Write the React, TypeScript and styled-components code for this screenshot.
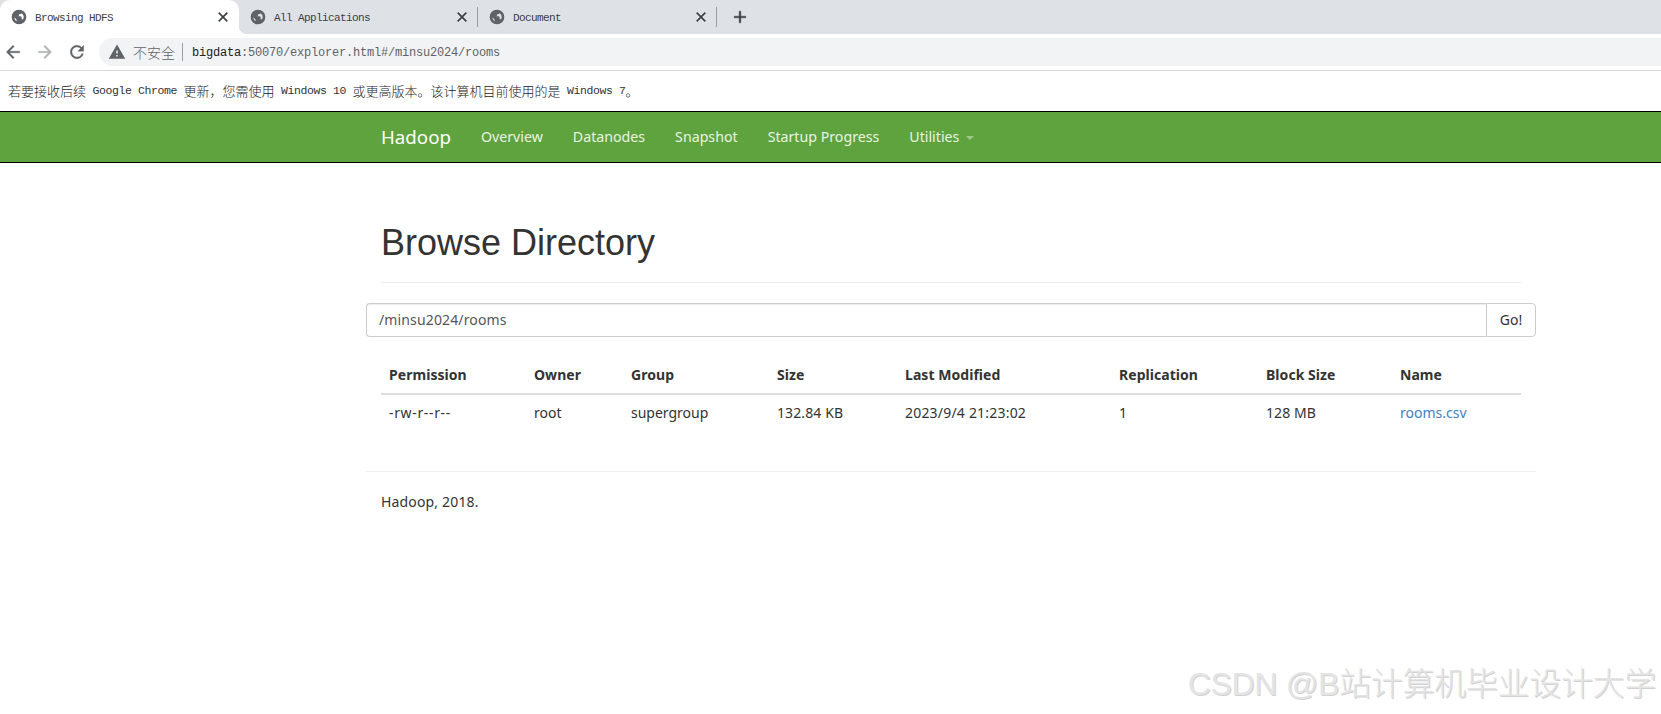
import React from "react";
import styled, { createGlobalStyle } from "styled-components";

const GlobalStyle = createGlobalStyle`
  html, body { margin: 0; padding: 0; background: #fff; }
  body { font-family: "Noto Sans", "Liberation Sans", sans-serif; font-size: 14px; color: #333; overflow: hidden; }
`;

const mono = `"Liberation Mono", "Noto Sans CJK SC", monospace`;
const cjk = `"Noto Sans CJK SC", "Liberation Mono", sans-serif`;

const Page = styled.div`position: relative; width: 1661px; height: 714px; overflow: hidden;`;

const TabStrip = styled.div`display: flex; height: 34px; background: #dee1e6;`;
const Tab = styled.div<{ $active?: boolean; $sep?: boolean }>`
  position: relative;
  width: 239px;
  box-sizing: border-box;
  display: flex;
  align-items: center;
  padding-left: 11px;
  background: ${p => (p.$active ? "#fff" : "transparent")};
  border-radius: ${p => (p.$active ? "10px 10px 0 0" : "0")};
  ${p => p.$active && `
    &::after {
      content: "";
      position: absolute;
      right: -8px;
      bottom: 0;
      width: 8px;
      height: 8px;
      background: radial-gradient(circle at 100% 0, transparent 8px, #fff 8.5px);
    }
  `}
  ${p => p.$sep && `
    &::before {
      content: "";
      position: absolute;
      right: 0;
      top: 7px;
      height: 20px;
      width: 1px;
      background: #9a9da1;
    }
  `}
`;
const TabTitle = styled.span`
  flex: 1;
  margin-left: 8px;
  font: 11px ${mono};
  letter-spacing: -0.6px;
  color: #3c4043;
  white-space: pre;
  position: relative;
  top: 0.5px;
`;
const Favicon = styled.svg`
  width: 16px; height: 16px; flex: none;
  fill: #5f6368; stroke: #5f6368; stroke-width: 2;
`;
const CloseIcon = styled.svg`width: 16px; height: 16px; flex: none; margin-right: 8px; fill: #3c4043; stroke: #3c4043; stroke-width: 0.7;`;
const NewTab = styled.svg`width: 20px; height: 20px; fill: #3c4043; stroke: #3c4043; stroke-width: 0.5; align-self: center; margin-left: 13px;`;

const Toolbar = styled.div`
  display: flex;
  align-items: center;
  height: 36px;
  background: #fff;
  border-bottom: 1px solid #d9d9d9;
`;
const NavIcon = styled.svg<{ $gap: number; $dim?: boolean }>`
  width: 20px; height: 20px; flex: none; margin-left: ${p => p.$gap}px;
  fill: ${p => (p.$dim ? "#b1b3b6" : "#5f6368")};
  stroke: ${p => (p.$dim ? "#b1b3b6" : "#5f6368")};
  stroke-width: 0.4;
`;
const Omnibox = styled.div`
  flex: 1;
  height: 28px;
  margin-left: 12px;
  border-radius: 14px 0 0 14px;
  background: #f1f3f4;
  display: flex;
  align-items: center;
  padding-left: 10px;
`;
const WarnIcon = styled.svg`width: 18px; height: 18px; fill: #5f6368; flex: none; margin-left: -1px;`;
const Insecure = styled.span`margin-left: 7px; font: 300 14px ${cjk}; color: #5f6368;`;
const OmniSep = styled.span`width: 1px; height: 18px; background: #9a9da1; margin: 0 9px 0 7px;`;
const Url = styled.span`font: 12px ${mono}; letter-spacing: -0.2px; color: #5f6368; white-space: pre; position: relative; top: 1px;`;
const Host = styled.span`color: #202124;`;

const InfoBar = styled.div`
  height: 40px;
  box-sizing: border-box;
  padding: 0 0 2px 8px;
  display: flex;
  align-items: center;
  font: 300 13px ${cjk};
  color: #222;
  white-space: pre;
`;
const Latin = styled.span`font: 11.5px ${mono}; letter-spacing: -0.4px; color: #333;`;

const Navbar = styled.nav`
  height: 50px;
  background: #5fa33e;
  border-top: 1px solid #000;
  border-bottom: 1px solid #000;
`;
const Container = styled.div`width: 1170px; margin-left: 366px;`;
const NavInner = styled(Container)`display: flex; align-items: center; height: 50px;`;
const Brand = styled.a`padding: 0 15px; font-size: 18.7px; color: #fff; line-height: 20px;`;
const NavLink = styled.a`
  display: flex;
  align-items: center;
  padding: 0 15px;
  font-size: 14.2px;
  line-height: 20px;
  color: #e9f3e2;
`;
const Caret = styled.span`
  display: inline-block;
  width: 0; height: 0;
  margin-left: 7px;
  margin-top: 2px;
  border-top: 4px solid #9ec98a;
  border-left: 4px solid transparent;
  border-right: 4px solid transparent;
`;

const Inner = styled.div`padding: 0 15px;`;
const PageHeader = styled.div`
  margin-top: 60px;
  padding-bottom: 19px;
  margin-bottom: 20px;
  border-bottom: 1px solid #eee;
`;
const Title = styled.h1`
  margin: 0;
  font: 400 36px/39.6px "Liberation Sans", Arial, sans-serif;
  color: #333;
`;
const InputGroup = styled.div`display: flex; height: 34px;`;
const PathInput = styled.div`
  flex: 1;
  box-sizing: border-box;
  border: 1px solid #ccc;
  border-right: 0;
  border-radius: 4px 0 0 4px;
  box-shadow: inset 0 1px 1px rgba(0,0,0,.075);
  padding: 6px 12px;
  line-height: 20px;
  letter-spacing: .14px;
  color: #555;
`;
const GoButton = styled.button`
  width: 50px;
  box-sizing: border-box;
  border: 1px solid #ccc;
  border-radius: 0 4px 4px 0;
  background: #fff;
  font: inherit;
  color: #333;
  padding: 0;
`;
const Table = styled.table`
  width: 1140px;
  table-layout: fixed;
  border-collapse: collapse;
  margin-top: 20px;
`;
const Col = styled.col<{ $w: number }>`width: ${p => p.$w}px;`;
const Th = styled.th`
  padding: 8px;
  text-align: left;
  font-weight: 700;
  line-height: 20px;
  letter-spacing: .05px;
  color: #333;
  border-bottom: 2px solid #ddd;
`;
const Td = styled.td<{ $track?: number }>`
  padding: 8px;
  line-height: 20px;
  color: #333;
  letter-spacing: ${p => p.$track ?? 0}px;
`;
const FileLink = styled.a`color: #3d83c0;`;
const Footer = styled.div`
  margin-top: 40px;
  border-top: 1px solid #eee;
  padding: 20px 15px 0;
  line-height: 20px;
  letter-spacing: .16px;
`;
const Watermark = styled.div`
  position: absolute;
  right: 5px;
  top: 664px;
  font: 300 32px/40px "Liberation Sans", "Noto Sans CJK SC", sans-serif;
  letter-spacing: -0.3px;
  color: #e4e4e4;
  text-shadow: 1px 1px 0 #d2d2d2;
  white-space: nowrap;
`;

const GLOBE = "M12 2C6.48 2 2 6.48 2 12s4.48 10 10 10 10-4.48 10-10S17.52 2 12 2zm-1 17.93c-3.95-.49-7-3.85-7-7.93 0-.62.08-1.21.21-1.79L9 15v1c0 1.1.9 2 2 2v1.93zm6.9-2.54c-.26-.81-1-1.39-1.9-1.39h-1v-3c0-.55-.45-1-1-1H8v-2h2c.55 0 1-.45 1-1V7h2c1.1 0 2-.9 2-2v-.41c2.93 1.19 5 4.06 5 7.41 0 2.08-.8 3.97-2.1 5.39z";
const CLOSE = "M19 6.41L17.59 5 12 10.59 6.41 5 5 6.41 10.59 12 5 17.59 6.41 19 12 13.41 17.59 19 19 17.59 13.41 12 19 6.41z";

const tabs = [
  { title: "Browsing HDFS", active: true },
  { title: "All Applications" },
  { title: "Document" },
];
const colWidths = [145, 97, 146, 128, 214, 147, 134, 129];
const heads = ["Permission", "Owner", "Group", "Size", "Last Modified", "Replication", "Block Size", "Name"];

export default function App() {
  return (
    <Page>
      <GlobalStyle />
      <TabStrip>
        {tabs.map((t, i) => (
          <Tab key={t.title} $active={t.active} $sep={i > 0}>
            <Favicon viewBox="0 0 24 24"><path d={GLOBE} /></Favicon>
            <TabTitle>{t.title}</TabTitle>
            <CloseIcon viewBox="0 0 24 24"><path d={CLOSE} /></CloseIcon>
          </Tab>
        ))}
        <NewTab viewBox="0 0 24 24"><path d="M19 13h-6v6h-2v-6H5v-2h6V5h2v6h6v2z" /></NewTab>
      </TabStrip>
      <Toolbar>
        <NavIcon $gap={3} viewBox="0 0 24 24"><path d="M20 11H7.83l5.59-5.59L12 4l-8 8 8 8 1.41-1.41L7.83 13H20v-2z" /></NavIcon>
        <NavIcon $gap={11.5} $dim viewBox="0 0 24 24"><path d="M12 4l-1.41 1.41L16.17 11H4v2h12.17l-5.58 5.59L12 20l8-8z" /></NavIcon>
        <NavIcon $gap={12.5} viewBox="0 0 24 24"><path d="M17.65 6.35C16.2 4.9 14.21 4 12 4c-4.42 0-7.99 3.58-7.99 8s3.57 8 7.99 8c3.73 0 6.84-2.55 7.73-6h-2.08c-.82 2.33-3.04 4-5.65 4-3.31 0-6-2.69-6-6s2.69-6 6-6c1.66 0 3.14.69 4.22 1.78L13 11h7V4l-2.35 2.35z" /></NavIcon>
        <Omnibox>
          <WarnIcon viewBox="0 0 24 24"><path d="M1 21h22L12 2 1 21zm12-3h-2v-2h2v2zm0-4h-2v-4h2v4z" /></WarnIcon>
          <Insecure>不安全</Insecure>
          <OmniSep />
          <Url><Host>bigdata</Host>:50070/explorer.html#/minsu2024/rooms</Url>
        </Omnibox>
      </Toolbar>
      <InfoBar>
        若要接收后续<Latin> Google Chrome </Latin>更新，您需使用<Latin> Windows 10 </Latin>或更高版本。该计算机目前使用的是<Latin> Windows 7</Latin>。
      </InfoBar>
      <Navbar>
        <NavInner>
          <Brand>Hadoop</Brand>
          <NavLink>Overview</NavLink>
          <NavLink>Datanodes</NavLink>
          <NavLink>Snapshot</NavLink>
          <NavLink>Startup Progress</NavLink>
          <NavLink>Utilities<Caret /></NavLink>
        </NavInner>
      </Navbar>
      <Container>
        <Inner>
          <PageHeader><Title>Browse Directory</Title></PageHeader>
        </Inner>
        <InputGroup>
          <PathInput>/minsu2024/rooms</PathInput>
          <GoButton>Go!</GoButton>
        </InputGroup>
        <Inner>
          <Table>
            <colgroup>{colWidths.map((w, i) => <Col key={i} $w={w} />)}</colgroup>
            <thead>
              <tr>{heads.map(h => <Th key={h}>{h}</Th>)}</tr>
            </thead>
            <tbody>
              <tr>
                <Td $track={0.65}>-rw-r--r--</Td>
                <Td>root</Td>
                <Td>supergroup</Td>
                <Td $track={0.1}>132.84 KB</Td>
                <Td $track={0.2}>2023/9/4 21:23:02</Td>
                <Td>1</Td>
                <Td $track={0.1}>128 MB</Td>
                <Td><FileLink>rooms.csv</FileLink></Td>
              </tr>
            </tbody>
          </Table>
        </Inner>
        <Footer>Hadoop, 2018.</Footer>
      </Container>
      <Watermark>CSDN @B站计算机毕业设计大学</Watermark>
    </Page>
  );
}
